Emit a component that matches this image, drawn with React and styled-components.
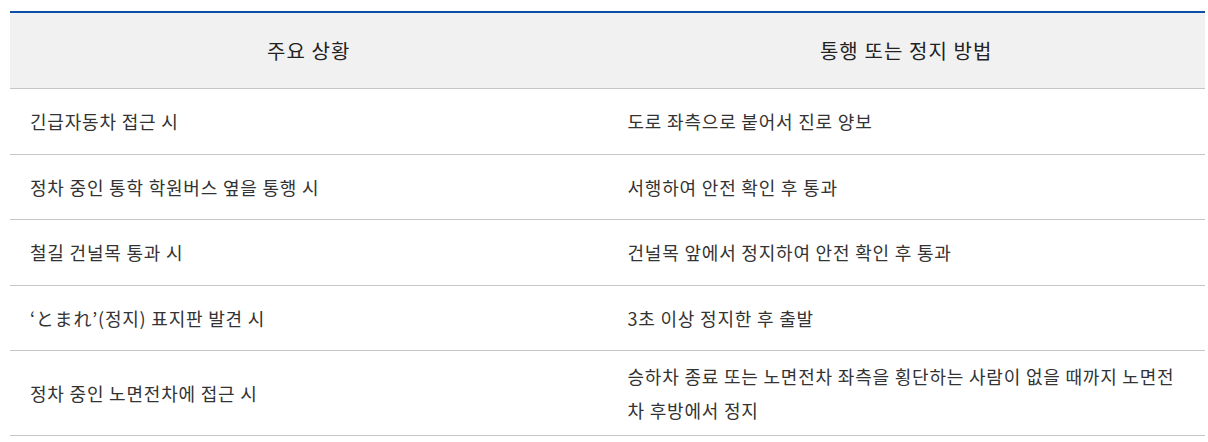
import styled, { createGlobalStyle } from "styled-components";

const GlobalStyle = createGlobalStyle`
  html, body {
    margin: 0;
    padding: 0;
    background: #fff;
  }
  body {
    font-family: "Noto Sans CJK KR", "Noto Sans", sans-serif;
  }
`;

const rows = [
  ["긴급자동차 접근 시", "도로 좌측으로 붙어서 진로 양보"],
  ["정차 중인 통학 학원버스 옆을 통행 시", "서행하여 안전 확인 후 통과"],
  ["철길 건널목 통과 시", "건널목 앞에서 정지하여 안전 확인 후 통과"],
  ["‘とまれ’(정지) 표지판 발견 시", "3초 이상 정지한 후 출발"],
  [
    "정차 중인 노면전차에 접근 시",
    "승하차 종료 또는 노면전차 좌측을 횡단하는 사람이 없을 때까지 노면전차 후방에서 정지",
  ],
];

const App = () => {
  return (
    <>
      <GlobalStyle />
      <Wrapper>
        <Table>
          <colgroup>
            <col style={{ width: "50%" }} />
            <col style={{ width: "50%" }} />
          </colgroup>
          <thead>
            <tr>
              <HeadCell>주요 상황</HeadCell>
              <HeadCell>통행 또는 정지 방법</HeadCell>
            </tr>
          </thead>
          <tbody>
            {rows.map(([situation, method]) => (
              <tr key={situation}>
                <Cell>{situation}</Cell>
                <Cell>{method}</Cell>
              </tr>
            ))}
          </tbody>
        </Table>
      </Wrapper>
    </>
  );
};
export default App;

const Wrapper = styled.div`
  padding: 11px 3px 0 10px;
`;

const Table = styled.table`
  width: 1195px;
  border-collapse: collapse;
  table-layout: fixed;
  border-top: 2px solid #0b4fa8;
`;

const HeadCell = styled.th`
  height: 75px;
  padding: 0 20px;
  background-color: #f1f1f1;
  border-bottom: 1px solid #c6c6c6;
  font-weight: 400;
  font-size: 20px;
  letter-spacing: 1.1px;
  color: #222;
  text-align: center;
  vertical-align: middle;
`;

const Cell = styled.td`
  box-sizing: border-box;
  height: 65.5px;
  padding: 8px 25px 8px 20px;
  border-bottom: 1px solid #c6c6c6;
  font-size: 18px;
  letter-spacing: 0.8px;
  line-height: 34px;
  color: #333;
  text-align: left;
  vertical-align: middle;
`;
